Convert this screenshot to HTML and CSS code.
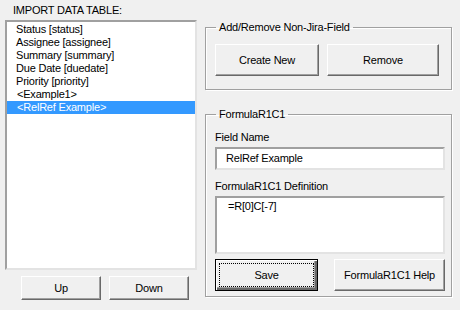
FILE: index.html
```html
<!DOCTYPE html>
<html lang="en">

<head>
    <meta charset="UTF-8">
    <title>Import Data Table</title>
    <link rel="stylesheet" href="styles.css">
</head>

<body>
    <div class="app">
        <div class="left">
            <div class="caption">IMPORT DATA TABLE:</div>
            <ul class="list">
                <li>Status [status]</li>
                <li>Assignee [assignee]</li>
                <li>Summary [summary]</li>
                <li>Due Date [duedate]</li>
                <li>Priority [priority]</li>
                <li class="extra">&lt;Example1&gt;</li>
                <li class="extra selected">&lt;RelRef Example&gt;</li>
            </ul>
            <div class="moves">
                <button class="btn small">Up</button>
                <button class="btn small">Down</button>
            </div>
        </div>

        <div class="right">
            <fieldset class="group first">
                <legend>Add/Remove Non-Jira-Field</legend>
                <div class="row">
                    <button class="btn wide">Create New</button>
                    <button class="btn wider">Remove</button>
                </div>
            </fieldset>

            <fieldset class="group second">
                <legend>FormulaR1C1</legend>
                <div class="field-label">Field Name</div>
                <div class="input">RelRef Example</div>
                <div class="field-label">FormulaR1C1 Definition</div>
                <div class="input area">=R[0]C[-7]</div>
                <div class="row bottom">
                    <button class="btn wide default"><span class="focus">Save</span></button>
                    <button class="btn wider">FormulaR1C1 Help</button>
                </div>
            </fieldset>
        </div>
    </div>
</body>

</html>
```

FILE: styles.css
```css
body {
    margin: 0;
    padding: 0;
    background-color: #f0f0f0;
    font-family: "Liberation Sans", Arial, sans-serif;
    font-size: 11px;
    letter-spacing: -0.2px;
    color: #000;
}

.app {
    display: flex;
    padding: 4px 0 0 5px;
}

.left {
    width: 192px;
}

.caption {
    line-height: 13px;
    padding-left: 8px;
    margin-bottom: 3px;
}

.list {
    box-sizing: border-box;
    margin: 0;
    padding: 1px 0 0 0;
    list-style-type: none;
    height: 250px;
    background: #fff;
    border: 2px solid;
    border-color: #a0a0a0 #e3e3e3 #e3e3e3 #a0a0a0;
}

.list li {
    height: 13px;
    line-height: 13px;
    padding-left: 9px;
}

.list li.extra {
    padding-left: 10px;
}

.list li.selected {
    background: #3399ff;
    color: #fff;
}

.moves {
    display: flex;
    gap: 8px;
    margin-top: 6px;
    padding-left: 16px;
}

.btn {
    box-sizing: border-box;
    font-family: inherit;
    font-size: 11px;
    letter-spacing: inherit;
    color: #000;
    background: #f0f0f0;
    border: 1px solid;
    border-color: #fff #696969 #696969 #fff;
    box-shadow: inset -1px -1px 0 #a0a0a0;
    padding: 0;
    margin: 0;
}

.btn.small {
    width: 80px;
    height: 24px;
}

.btn.wide {
    width: 104px;
    height: 32px;
}

.btn.wider {
    width: 112px;
    height: 32px;
}

.btn.default {
    border: 1px solid #000;
    box-shadow: inset 1px 1px 0 #fff, inset -2px -2px 0 #696969, inset -3px -3px 0 #a0a0a0;
    padding: 3px;
}

.focus {
    display: flex;
    align-items: center;
    justify-content: center;
    height: 100%;
    border: 1px dotted #000;
    box-sizing: border-box;
}

.right {
    margin-left: 8px;
    width: 247px;
}

.group {
    margin: 0;
    padding: 0 6px 0 9px;
    border: 1px solid #a0a0a0;
    box-shadow: 1px 1px 0 #fff, inset 1px 1px 0 #fff;
    min-width: 0;
}

.group legend {
    padding: 0 3px;
    line-height: 13px;
    margin-left: 1px;
}

.group.first {
    margin-top: 17px;
    padding-top: 10px;
    padding-bottom: 13px;
}

.group.second {
    margin-top: 18px;
    padding-top: 10px;
    padding-bottom: 5px;
}

.row {
    display: flex;
    gap: 8px;
}

.row.bottom {
    gap: 16px;
    margin-top: 5px;
}

.field-label {
    line-height: 13px;
    margin-bottom: 3px;
}

.input {
    box-sizing: border-box;
    height: 23px;
    line-height: 19px;
    padding-left: 9px;
    margin-bottom: 10px;
    background: #fff;
    border: 2px solid;
    border-color: #a0a0a0 #e3e3e3 #e3e3e3 #a0a0a0;
}

.input.area {
    height: 58px;
    margin-bottom: 0;
    padding: 2px 0 0 11px;
    line-height: 13px;
}
```
